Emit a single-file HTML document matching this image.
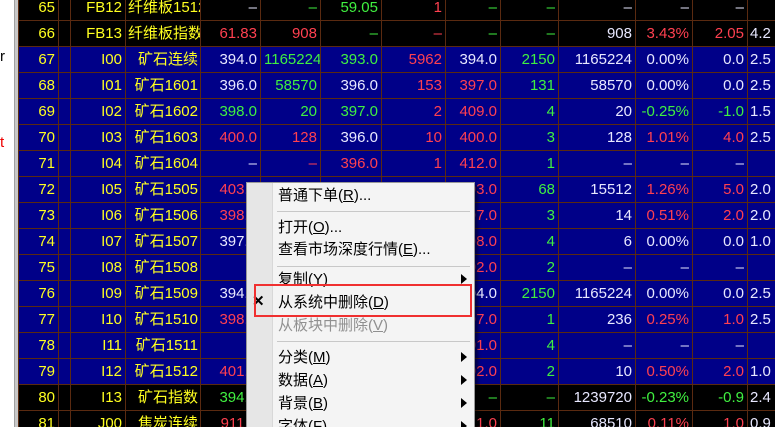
<!DOCTYPE html>
<html><head><meta charset="utf-8"><style>
html,body{margin:0;width:775px;height:427px;overflow:hidden}
body{background:#000;position:relative;font-family:"Liberation Sans","Noto Sans CJK SC",sans-serif}
.ls{position:absolute;left:0;top:0;width:14px;height:427px;background:#fff}
.sb{position:absolute;left:14px;top:0;width:4px;height:427px;background:#c8c8c8;border-left:1px solid #a0a0a0;box-sizing:border-box}
table{position:absolute;left:18px;top:-6px;width:757px;border-collapse:collapse;table-layout:fixed;font-size:15px}
td{border:1px solid #5a2a10;height:25px;padding:0 3px;text-align:right;white-space:nowrap;overflow:hidden;color:#e8e8ff;line-height:25px;vertical-align:middle}
tr.b td{background:#000}
tr.n td{background:#000088}
td.y{color:#ffff20}
td.c{padding:0 2px 0 0}
td.c span{display:inline-block;line-height:20px;vertical-align:middle;position:relative;top:0}
.g{color:#40f040}.r{color:#ff4050}.w{color:#e8e8ff}
td.l{text-align:left;padding-left:2px}
.menu{position:absolute;left:246px;top:182px;width:227px;height:260px;background:#f4f4f4;border:1px solid #999;box-shadow:3px 3px 3px rgba(0,0,0,.5);font-size:15px;color:#000}
.ic{position:absolute;left:0;top:0;width:25px;height:100%;background:#e6e6e6;border-right:1px solid #d8d8d8}
.it{position:absolute;left:31px;height:23px;line-height:23px}
.sep{position:absolute;left:30px;right:4px;height:1px;background:#c8c8c8}
.ar{position:absolute;left:214px;width:0;height:0;border-left:6px solid #000;border-top:5px solid transparent;border-bottom:5px solid transparent}
u{text-decoration:underline}
.red{position:absolute;left:254px;top:284px;width:214px;height:29px;border:2px solid #f03030}
</style></head><body>
<div class="ls"><span style="position:absolute;left:0;top:48px;font-size:15px">r</span><span style="position:absolute;left:0;top:134px;font-size:15px;color:#e00">t</span></div>
<div class="sb"></div>
<table>
<colgroup><col style="width:40px"><col style="width:12px"><col style="width:55px"><col style="width:75px"><col style="width:60px"><col style="width:60px"><col style="width:61px"><col style="width:64px"><col style="width:55px"><col style="width:58px"><col style="width:77px"><col style="width:57px"><col style="width:55px"><col style="width:28px"></colgroup>
<tr class="b"><td class="y">65</td><td></td><td class="y">FB12</td><td class="y l c"><span>纤维板1512</span></td><td>–</td><td class="g">–</td><td class="g">59.05</td><td class="r">1</td><td class="g">–</td><td class="g">–</td><td>–</td><td>–</td><td>–</td><td class="l"></td></tr>
<tr class="b"><td class="y">66</td><td></td><td class="y">FB13</td><td class="y l c"><span>纤维板指数</span></td><td class="r">61.83</td><td class="r">908</td><td class="g">–</td><td class="r">–</td><td class="g">–</td><td class="g">–</td><td>908</td><td class="r">3.43%</td><td class="r">2.05</td><td class="l">4.2</td></tr>
<tr class="n"><td class="y">67</td><td></td><td class="y">I00</td><td class="y c"><span>矿石连续</span></td><td>394.0</td><td class="g">1165224</td><td class="g">393.0</td><td class="r">5962</td><td>394.0</td><td class="g">2150</td><td>1165224</td><td>0.00%</td><td>0.0</td><td class="l">2.5</td></tr>
<tr class="n"><td class="y">68</td><td></td><td class="y">I01</td><td class="y c"><span>矿石1601</span></td><td>396.0</td><td class="g">58570</td><td>396.0</td><td class="r">153</td><td class="r">397.0</td><td class="g">131</td><td>58570</td><td>0.00%</td><td>0.0</td><td class="l">2.5</td></tr>
<tr class="n"><td class="y">69</td><td></td><td class="y">I02</td><td class="y c"><span>矿石1602</span></td><td class="g">398.0</td><td class="g">20</td><td class="g">397.0</td><td class="r">2</td><td class="r">409.0</td><td class="g">4</td><td>20</td><td class="g">-0.25%</td><td class="g">-1.0</td><td class="l">1.5</td></tr>
<tr class="n"><td class="y">70</td><td></td><td class="y">I03</td><td class="y c"><span>矿石1603</span></td><td class="r">400.0</td><td class="r">128</td><td>396.0</td><td class="r">10</td><td class="r">400.0</td><td class="g">3</td><td>128</td><td class="r">1.01%</td><td class="r">4.0</td><td class="l">2.5</td></tr>
<tr class="n"><td class="y">71</td><td></td><td class="y">I04</td><td class="y c"><span>矿石1604</span></td><td>–</td><td class="r">–</td><td class="r">396.0</td><td class="r">1</td><td class="r">412.0</td><td class="g">1</td><td>–</td><td>–</td><td>–</td><td class="l"></td></tr>
<tr class="n"><td class="y">72</td><td></td><td class="y">I05</td><td class="y c"><span>矿石1505</span></td><td class="r">403.0</td><td></td><td></td><td></td><td class="r">403.0</td><td class="g">68</td><td>15512</td><td class="r">1.26%</td><td class="r">5.0</td><td class="l">2.0</td></tr>
<tr class="n"><td class="y">73</td><td></td><td class="y">I06</td><td class="y c"><span>矿石1506</span></td><td class="r">398.0</td><td></td><td></td><td></td><td class="r">397.0</td><td class="g">3</td><td>14</td><td class="r">0.51%</td><td class="r">2.0</td><td class="l">2.0</td></tr>
<tr class="n"><td class="y">74</td><td></td><td class="y">I07</td><td class="y c"><span>矿石1507</span></td><td>397.0</td><td></td><td></td><td></td><td class="r">398.0</td><td class="g">4</td><td>6</td><td>0.00%</td><td>0.0</td><td class="l">1.0</td></tr>
<tr class="n"><td class="y">75</td><td></td><td class="y">I08</td><td class="y c"><span>矿石1508</span></td><td>–</td><td></td><td></td><td></td><td class="r">402.0</td><td class="g">2</td><td>–</td><td>–</td><td>–</td><td class="l"></td></tr>
<tr class="n"><td class="y">76</td><td></td><td class="y">I09</td><td class="y c"><span>矿石1509</span></td><td>394.0</td><td></td><td></td><td></td><td>394.0</td><td class="g">2150</td><td>1165224</td><td>0.00%</td><td>0.0</td><td class="l">2.5</td></tr>
<tr class="n"><td class="y">77</td><td></td><td class="y">I10</td><td class="y c"><span>矿石1510</span></td><td class="r">398.0</td><td></td><td></td><td></td><td class="r">397.0</td><td class="g">1</td><td>236</td><td class="r">0.25%</td><td class="r">1.0</td><td class="l">2.5</td></tr>
<tr class="n"><td class="y">78</td><td></td><td class="y">I11</td><td class="y c"><span>矿石1511</span></td><td>–</td><td></td><td></td><td></td><td class="r">401.0</td><td class="g">4</td><td>–</td><td>–</td><td>–</td><td class="l"></td></tr>
<tr class="n"><td class="y">79</td><td></td><td class="y">I12</td><td class="y c"><span>矿石1512</span></td><td class="r">401.0</td><td></td><td></td><td></td><td class="r">402.0</td><td class="g">2</td><td>10</td><td class="r">0.50%</td><td class="r">2.0</td><td class="l">1.0</td></tr>
<tr class="b"><td class="y">80</td><td></td><td class="y">I13</td><td class="y c"><span>矿石指数</span></td><td class="g">394.0</td><td></td><td></td><td></td><td class="g">–</td><td class="g">–</td><td>1239720</td><td class="g">-0.23%</td><td class="g">-0.9</td><td class="l">2.4</td></tr>
<tr class="b"><td class="y">81</td><td></td><td class="y">J00</td><td class="y c"><span>焦炭连续</span></td><td class="r">911.0</td><td></td><td></td><td></td><td class="r">911.0</td><td class="g">11</td><td>68510</td><td class="r">0.11%</td><td class="r">1.0</td><td class="l">0.9</td></tr>
</table>
<div class="menu">
<div class="ic"></div>
<div class="it" style="top:1px">普通下单(<u>R</u>)...</div>
<div class="sep" style="top:28px"></div>
<div class="it" style="top:33px">打开(<u>O</u>)...</div>
<div class="it" style="top:55px">查看市场深度行情(<u>E</u>)...</div>
<div class="sep" style="top:83px"></div>
<div class="it" style="top:85px">复制(<u>Y</u>)</div><div class="ar" style="top:91px"></div>
<div class="it" style="top:108px">从系统中删除(<u>D</u>)</div>
<div class="it" style="top:131px;color:#909090">从板块中删除(<u>V</u>)</div>
<div class="sep" style="top:158px"></div>
<div class="it" style="top:163px">分类(<u>M</u>)</div><div class="ar" style="top:169px"></div>
<div class="it" style="top:186px">数据(<u>A</u>)</div><div class="ar" style="top:192px"></div>
<div class="it" style="top:209px">背景(<u>B</u>)</div><div class="ar" style="top:215px"></div>
<div class="it" style="top:232px">字体(<u>F</u>)</div><div class="ar" style="top:238px"></div>
</div>
<div style="position:absolute;left:252px;top:292px;font-size:15px;font-weight:bold">✕</div>
<div class="red"></div>
</body></html>
